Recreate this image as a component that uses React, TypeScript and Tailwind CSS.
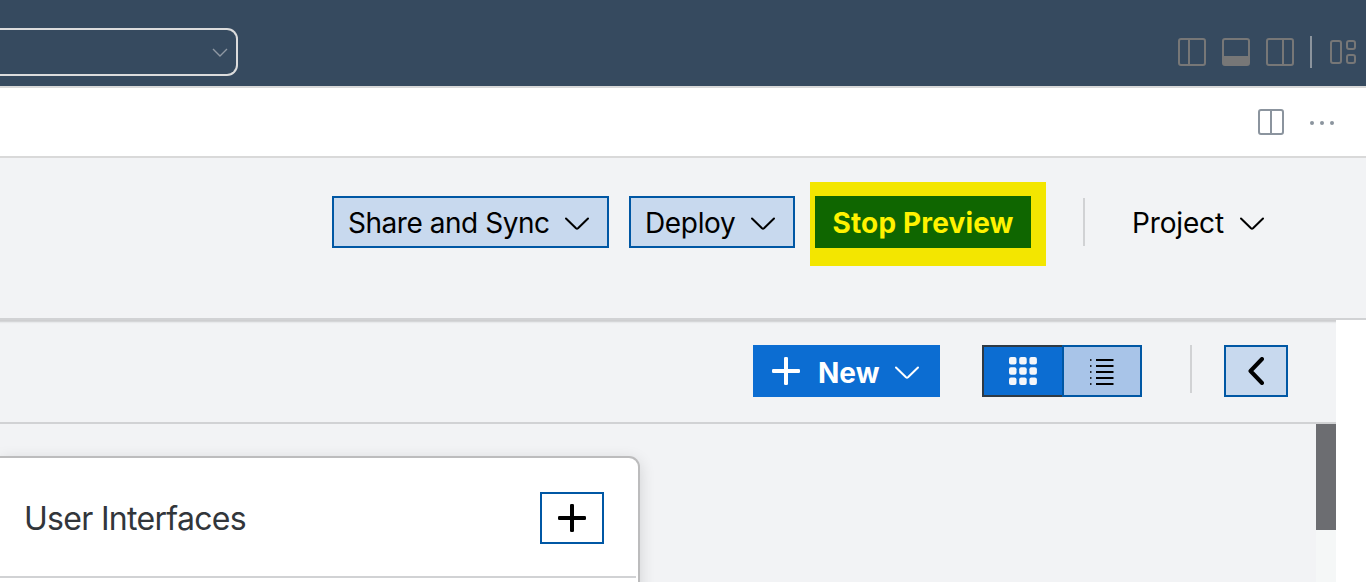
import React from "react";

function Chevron({ className = "" }: { className?: string }) {
  return (
    <svg className={`h-[14px] w-6 shrink-0 ${className}`} viewBox="0 0 24 14" fill="none" stroke="currentColor" strokeWidth="2" strokeLinecap="round" strokeLinejoin="round">
      <path d="M1 1.5 L11 11.3 Q12 12.2 13 11.3 L23 1.5" />
    </svg>
  );
}

function Plus() {
  return (
    <svg className="h-7 w-7 shrink-0" viewBox="0 0 28 28" fill="currentColor">
      <rect x="12" y="0" width="4" height="28" rx="1.3" />
      <rect x="0" y="12" width="28" height="4" rx="1.3" />
    </svg>
  );
}

function TitleBar() {
  return (
    <header className="flex h-[88px] shrink-0 items-start justify-between border-b-2 border-[#d9d9d9] bg-[#364a5f] pr-[10px]">
      <div className="mt-7 flex h-12 w-[238px] items-center justify-end rounded-r-[11px] border-2 border-l-0 border-[#dcdcdc] pr-2">
        <svg className="h-[10px] w-4" viewBox="0 0 16 10" fill="none" stroke="#8f98a3" strokeWidth="1.4">
          <path d="M1 2 L8 9 L15 2" />
        </svg>
      </div>
      <div className="mt-9 flex h-8 items-center gap-4 text-[#777777]">
        <svg className="h-7 w-7" viewBox="0 0 28 28" fill="none" stroke="currentColor" strokeWidth="2">
          <rect x="1" y="1" width="26" height="26" rx="2" />
          <path d="M11 1V27" />
        </svg>
        <svg className="h-7 w-7" viewBox="0 0 28 28" fill="none" stroke="currentColor" strokeWidth="2">
          <rect x="1" y="1" width="26" height="26" rx="2" />
          <path d="M1 18H27V26H1Z" fill="currentColor" stroke="none" />
        </svg>
        <svg className="h-7 w-7" viewBox="0 0 28 28" fill="none" stroke="currentColor" strokeWidth="2">
          <rect x="1" y="1" width="26" height="26" rx="2" />
          <path d="M17 1V27" />
        </svg>
        <div className="h-8 w-[2px] bg-[#8c949d]" />
        <svg className="ml-[2px] h-6 w-[26px]" viewBox="0 0 26 24" fill="none" stroke="currentColor" strokeWidth="2">
          <rect x="1" y="1" width="10" height="22" rx="2" />
          <rect x="17" y="1" width="8" height="8" rx="2" />
          <rect x="17" y="15" width="8" height="8" rx="2" />
        </svg>
      </div>
    </header>
  );
}

function TabBar() {
  return (
    <div className="flex h-[70px] shrink-0 justify-end gap-[26px] border-b-2 border-[#d9d9d9] bg-white pt-[21px] pr-8 text-[#8b949e]">
      <svg className="h-[26px] w-[26px]" viewBox="0 0 26 26" fill="none" stroke="currentColor" strokeWidth="2">
        <rect x="1" y="1" width="24" height="24" rx="2" />
        <path d="M13 1V25" />
      </svg>
      <svg className="mt-3 h-1 w-6" viewBox="0 0 24 4" fill="currentColor">
        <circle cx="2" cy="2" r="2" />
        <circle cx="12" cy="2" r="2" />
        <circle cx="22" cy="2" r="2" />
      </svg>
    </div>
  );
}

function ActionBar() {
  return (
    <div className="flex h-[162px] shrink-0 items-start border-b-2 border-[#d1d2d4] pt-6 pl-[332px] text-[28px] text-black">
      <button className="mt-[14px] flex h-[52px] w-[277px] items-center justify-between border-2 border-[#0057a4] bg-[#c8d9ee] pr-[18px] pl-[14px]">
        <span className="pt-[2px] tracking-[-0.46px] whitespace-nowrap">Share and Sync</span>
        <Chevron className="mt-[3px]" />
      </button>
      <button className="mt-[14px] ml-5 flex h-[52px] w-[166px] items-center justify-between border-2 border-[#0057a4] bg-[#c8d9ee] pr-[18px] pl-[14px]">
        <span className="pt-[2px] tracking-[-0.35px]">Deploy</span>
        <Chevron className="mt-[3px]" />
      </button>
      <div className="ml-[15px] h-[84px] w-[236px] bg-[#f3e600] pt-[14px] pl-[5px]">
        <button className="flex h-[52px] w-[216px] items-center justify-center bg-[#0f6600] pt-[2px] font-bold tracking-[0.15px] whitespace-nowrap text-[#fff200]">
          Stop Preview
        </button>
      </div>
      <div className="mt-4 ml-[37px] h-12 w-[2px] bg-[#d1d2d4]" />
      <button className="mt-[14px] ml-[47px] flex h-[52px] w-[132px] items-center justify-between">
        <span className="pt-[2px] tracking-[-0.15px]">Project</span>
        <Chevron className="mt-[3px]" />
      </button>
    </div>
  );
}

function Toolbar() {
  return (
    <div className="flex h-[104px] shrink-0 items-start border-b-2 border-[#d1d2d4] pt-[25px] pl-[753px] shadow-[inset_0_4px_2px_-2px_rgba(0,0,0,0.16)]">
      <button className="flex h-[52px] w-[187px] items-center bg-[#0c6dd2] pl-[19px] text-[28px] font-bold text-white">
        <Plus />
        <span className="w-[77px] pt-[3px] pl-[18px]">New</span>
        <Chevron className="mt-[3px] ml-[18px]" />
      </button>
      <div className="ml-[42px] flex h-[52px]">
        <button className="flex w-20 items-center justify-center border-2 border-r-0 border-[#2f3a45] bg-[#0c6dd2]">
          <svg className="h-7 w-7" viewBox="0 0 28 28" fill="#f5f7fa">
            {[0, 10.2, 20.4].map((y) =>
              [0, 10.2, 20.4].map((x) => <rect key={`${x}-${y}`} x={x} y={y} width="7.5" height="7.5" rx="2" />)
            )}
          </svg>
        </button>
        <button className="flex w-20 items-center justify-center border-2 border-[#0057a4] bg-[#a8c4e8]">
          <svg className="mt-[2px] h-[26px] w-6" viewBox="0 0 24 26" fill="black">
            {[0, 6, 12, 18, 24].map((y) => (
              <g key={y}>
                <rect x="0" y={y} width="1.5" height="2" fillOpacity="0.8" />
                <rect x="6" y={y} width="17.5" height="2" />
              </g>
            ))}
          </svg>
        </button>
      </div>
      <div className="ml-12 h-12 w-[2px] bg-[#d1d2d4]" />
      <button className="ml-8 flex h-[52px] w-16 items-center justify-center border-2 border-[#0057a4] bg-[#c8d9ee]">
        <svg className="h-7 w-4" viewBox="0 0 16 28" fill="none" stroke="black" strokeWidth="4" strokeLinecap="round" strokeLinejoin="round">
          <path d="M14 2L2.5 14L14 26" />
        </svg>
      </button>
    </div>
  );
}

function Canvas() {
  return (
    <div className="flex min-h-0 grow justify-between overflow-hidden">
      <section className="mt-8 h-[160px] w-[640px] rounded-tr-[11px] border-2 border-l-0 border-[#bcbcbd] bg-white pr-[2px] shadow-[0_4px_16px_rgba(0,0,0,0.14)]">
        <div className="flex h-[120px] items-center justify-between border-b-2 border-[#d1d2d4] pt-[2px] pr-8 pl-6">
          <h2 className="pt-[2px] text-[32px] tracking-[-0.7px] whitespace-nowrap text-[#32363b]">User Interfaces</h2>
          <button className="flex h-[52px] w-16 items-center justify-center border-2 border-[#0057a4] text-black">
            <Plus />
          </button>
        </div>
      </section>
      <div className="w-5 bg-[#f5f7f7]">
        <div className="h-[106px] bg-[#6c6d71]" />
      </div>
    </div>
  );
}

export default function App() {
  return (
    <div className="flex h-[582px] w-[1366px] flex-col overflow-hidden bg-[#f2f3f5] font-['Inter','Liberation_Sans',sans-serif]">
      <TitleBar />
      <TabBar />
      <ActionBar />
      <div className="flex min-h-0 grow bg-white">
        <main className="flex w-[1336px] flex-col bg-[#f2f3f5]">
          <Toolbar />
          <Canvas />
        </main>
      </div>
    </div>
  );
}
